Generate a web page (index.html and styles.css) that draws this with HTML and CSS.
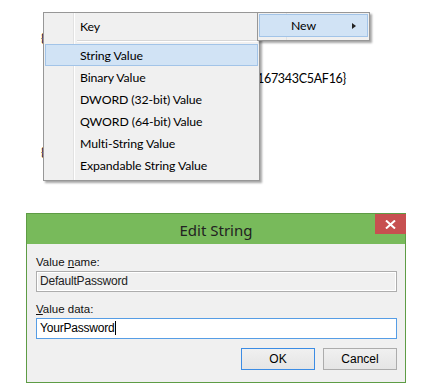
FILE: index.html
```html
<!DOCTYPE html>
<html lang="en">
<head>
    <meta charset="UTF-8">
    <title>Registry - New String Value</title>
    <link rel="stylesheet" href="styles.css">
</head>
<body>
    <div class="editor">
        <div class="reg-line one">{</div>
        <div class="reg-line guid">167343C5AF16}</div>
        <div class="reg-line two">{</div>

        <!-- context menu (sub menu opened to the left) -->
        <div class="menu">
            <div class="item"><span>Key</span></div>
            <div class="sep"></div>
            <div class="item hot"><span>String Value</span></div>
            <div class="item"><span>Binary Value</span></div>
            <div class="item"><span>DWORD (32-bit) Value</span></div>
            <div class="item"><span>QWORD (64-bit) Value</span></div>
            <div class="item"><span>Multi-String Value</span></div>
            <div class="item"><span>Expandable String Value</span></div>
        </div>
        <div class="menu parent">
            <div class="item hot"><span>New</span><i class="arrow"></i></div>
        </div>
    </div>

    <div class="dialog">
        <div class="titlebar">
            <div class="title">Edit String</div>
            <div class="close">
                <svg width="11" height="9" viewBox="0 0 11 9"><path d="M1 0.5 L10 8.5 M10 0.5 L1 8.5" stroke="#fff" stroke-width="2"/></svg>
            </div>
        </div>
        <div class="body">
            <label>Value <u>n</u>ame:</label>
            <div class="field disabled">DefaultPassword</div>
            <label><u>V</u>alue data:</label>
            <div class="field focus">YourPassword<span class="caret"></span></div>
            <div class="buttons">
                <button class="btn default">OK</button>
                <button class="btn">Cancel</button>
            </div>
        </div>
    </div>
</body>
</html>
```

FILE: styles.css
```css
body {
    margin: 0;
    background: #fff;
    font-family: Lato, "Noto Sans", sans-serif;
    color: #000;
}
.editor {
    position: relative;
    height: 213px;
    font-size: 12px;
    letter-spacing: -0.1px;
}
.reg-line {
    position: absolute;
    line-height: 16px;
}
.reg-line.one { left: 41px; top: 30px; }
.reg-line.two { left: 41px; top: 144px; }
.reg-line.guid { left: 257px; top: 71px; font-size: 12.5px; letter-spacing: -0.3px; }

.menu {
    position: absolute;
    left: 43px;
    top: 12px;
    width: 213px;
    height: 165px;
    padding: 1px;
    background: #f0f0f0;
    border: 1px solid #979797;
    box-shadow: 2px 2px 2px rgba(0, 0, 0, 0.35);
    background-image: linear-gradient(to right, transparent 29px, #e2e2e2 29px, #e2e2e2 30px, #fff 30px, #fff 31px, transparent 31px);
}
.menu.parent {
    left: 257px;
    width: 109px;
    height: 25px;
    background-image: linear-gradient(to right, transparent 28px, #e2e2e2 28px, #e2e2e2 29px, transparent 29px);
}
.item {
    position: relative;
    height: 22px;
    line-height: 21px;
    padding-left: 34px;
    border: 1px solid transparent;
    box-sizing: border-box;
    font-size: 12.3px;
}
.menu .item:first-child { height: 24px; line-height: 23px; }
.item.hot {
    background: #d1e3f5;
    border-color: #a2c4e8;
}
.menu.parent .item {
    height: 23px;
    line-height: 22px;
    padding-left: 31px;
}
.arrow {
    position: absolute;
    right: 11px;
    top: 8px;
    border-left: 4px solid #222;
    border-top: 3px solid transparent;
    border-bottom: 3px solid transparent;
}
.sep {
    height: 1px;
    margin: 2px 0 2px 32px;
    background: #d7d7d7;
    border-bottom: 1px solid #fff;
}

.dialog {
    margin-left: 26px;
    width: 378px;
    height: 168px;
    border: 1px solid #5e9c45;
    background: #f0f0f0;
    font-family: "Liberation Sans", Arial, sans-serif;
    font-size: 11.5px;
}
.titlebar {
    position: relative;
    height: 30px;
    background: #78ba5b;
    display: flex;
    align-items: center;
    justify-content: center;
}
.title {
    font-family: "Noto Sans", sans-serif;
    font-size: 15px;
    color: #222;
    margin-top: 2px;
}
.close {
    position: absolute;
    right: -1px;
    top: 0;
    width: 31px;
    height: 20px;
    background: #c75050;
    display: flex;
    align-items: center;
    justify-content: center;
}
.body {
    padding: 9px 8px 0 9px;
}
label {
    display: block;
    height: 18px;
    line-height: 18px;
    color: #111;
}
.field {
    height: 19px;
    line-height: 19px;
    border: 1px solid #adadad;
    padding-left: 3px;
    margin: 0 0 8px 0;
    background: #f0f0f0;
    box-shadow: inset 0 0 0 1px #fff;
    font-size: 12px;
    letter-spacing: -0.2px;
}
.field.disabled { color: #222; }
.field.focus {
    background: #fff;
    border-color: #569de5;
    box-shadow: none;
    margin-bottom: 9px;
}
.caret {
    display: inline-block;
    width: 1px;
    height: 14px;
    background: #000;
    vertical-align: -3px;
}
.buttons {
    display: flex;
    justify-content: flex-end;
    gap: 8px;
}
.btn {
    width: 74px;
    height: 22px;
    padding: 0;
    border: 1px solid #acacac;
    background: linear-gradient(#f0f0f0, #e5e5e5);
    font-family: "Liberation Sans", Arial, sans-serif;
    font-size: 12px;
    color: #000;
}
.btn.default {
    border-color: #3c8ce4;
}
```
